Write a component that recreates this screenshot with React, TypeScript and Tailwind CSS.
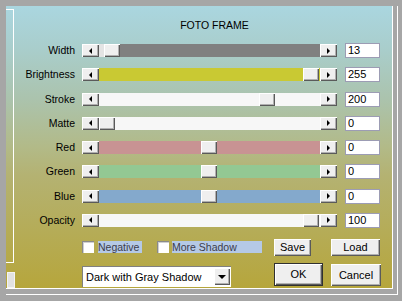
import React from 'react';

interface Row {
  label: string;
  value: string;
  offset: number;
  track: string;
  left: string;
}

const rows: Row[] = [
  { label: 'Width', value: '13', offset: 5, track: 'bg-[#808080]', left: 'bg-[#e4e4e4]' },
  { label: 'Brightness', value: '255', offset: 204, track: 'bg-[#c9c933]', left: 'bg-[#c9c933]' },
  { label: 'Stroke', value: '200', offset: 160, track: 'bg-[#f7f7f7]', left: 'bg-[#f7f7f7]' },
  { label: 'Matte', value: '0', offset: 0, track: 'bg-[#f7f7f7]', left: 'bg-[#f7f7f7]' },
  { label: 'Red', value: '0', offset: 102, track: 'bg-[#c89393]', left: 'bg-[#c89393]' },
  { label: 'Green', value: '0', offset: 102, track: 'bg-[#93c893]', left: 'bg-[#93c893]' },
  { label: 'Blue', value: '0', offset: 102, track: 'bg-[#84a9cc]', left: 'bg-[#84a9cc]' },
  { label: 'Opacity', value: '100', offset: 204, track: 'bg-[#f7f7f7]', left: 'bg-[#f7f7f7]' },
];

const raised =
  'bg-[#efefef] shadow-[inset_1px_1px_0_#ffffff,inset_-1px_-1px_0_#5a5a5a,inset_-2px_-2px_0_#b0b0b0]';

const ArrowBtn: React.FC<{ dir: 'left' | 'right' }> = ({ dir }) => (
  <div className={`w-[17px] h-[13px] flex items-center justify-center ${raised}`}>
    {dir === 'left' ? (
      <div className="w-0 h-0 border-t-[3px] border-b-[3px] border-r-[3px] border-t-transparent border-b-transparent border-r-black" />
    ) : (
      <div className="w-0 h-0 border-t-[3px] border-b-[3px] border-l-[3px] border-t-transparent border-b-transparent border-l-black" />
    )}
  </div>
);

const Slider: React.FC<{ row: Row }> = ({ row }) => (
  <div className="flex h-[13px] w-[255px]">
    <ArrowBtn dir="left" />
    <div className="flex flex-1 h-full">
      <div className={`h-full ${row.left}`} style={{ width: row.offset }} />
      <div className={`w-[16px] h-full ${raised}`} />
      <div className={`flex-1 h-full ${row.track}`} />
    </div>
    <ArrowBtn dir="right" />
  </div>
);

const Button: React.FC<{ label: string; cls: string; def?: boolean }> = ({ label, cls, def }) => (
  <div
    className={`${cls} flex items-center justify-center text-[11px] text-black ${raised} ${
      def ? 'border border-[#303030]' : ''
    }`}
  >
    {label}
  </div>
);

const Check: React.FC = () => (
  <div className="w-[12px] h-[12px] bg-white border-t border-l border-[#8a8a8a] border-r-white border-b-white shadow-[inset_1px_1px_0_#d0d0d0]" />
);

export default function App() {
  return (
    <div
      className="w-[402px] h-[301px] bg-[#a6a6a6] pt-[6px] pl-[6px] pr-[4px] pb-[6px]"
      style={{ fontFamily: '"Liberation Sans", Arial, sans-serif' }}
    >
      <div className="w-full h-full pr-[4px] pb-[5px] border-r border-b border-white">
        <div className="w-full h-full flex border-r border-b border-white bg-[linear-gradient(180deg,#aad6e0_0%,#a9cdca_16%,#abc3ad_33%,#b2ba88_50%,#b4b272_60%,#b6a63c_100%)]">
          {/* left strip */}
          <div className="w-[9px] flex flex-col pt-[3px]">
            <div className="w-[8px] h-[254px] border-t border-r border-b border-white" />
            <div className="mt-[9px] ml-[1px] w-[8px] h-[16px] bg-[#e2e2e2] border border-[#f4f4f4]" />
          </div>

          {/* main */}
          <div className="flex-1 flex flex-col">
            <div className="pt-[13px] pl-[22px] h-[38px] text-center text-[10.5px] leading-[12px] text-black">
              FOTO FRAME
            </div>

            <div className="flex flex-col gap-[11.29px]">
              {rows.map((row) => (
                <div key={row.label} className="flex items-center h-[13px]">
                  <div className="w-[60px] text-right text-[10.5px] leading-[13px] text-black">{row.label}</div>
                  <div className="ml-[7px]">
                    <Slider row={row} />
                  </div>
                  <div className="ml-[8px] w-[35px] h-[15px] bg-white border border-[#9c9cb4] pl-[2px] text-[11px] leading-[13px] text-black">
                    {row.value}
                  </div>
                </div>
              ))}
            </div>

            <div className="flex items-center h-[17px] mt-[12px] pl-[67px] text-[10.5px]">
              <Check />
              <div className="ml-[4px] w-[44px] h-[12px] leading-[12px] bg-[#b5c9e6] text-[#3c3c4c]">Negative</div>
              <div className="ml-[15px]">
                <Check />
              </div>
              <div className="ml-[3px] w-[90px] h-[12px] leading-[12px] bg-[#b5c9e6] text-[#3c3c4c]">More Shadow</div>
              <div className="ml-[12px]">
                <Button label="Save" cls="w-[37px] h-[17px]" />
              </div>
              <div className="ml-[20px]">
                <Button label="Load" cls="w-[49px] h-[17px]" />
              </div>
            </div>

            <div className="flex items-start mt-[7px] pl-[67px]">
              <div className="mt-[3px] w-[149px] h-[21px] bg-white border-t border-l border-[#808080] border-r-white border-b-white flex items-center">
                <div className="flex-1 pl-[3px] text-[11px] text-black">Dark with Gray Shadow</div>
                <div className={`w-[16px] h-[17px] mr-[1px] flex items-center justify-center ${raised}`}>
                  <div className="w-0 h-0 border-l-[4px] border-r-[4px] border-t-[4px] border-l-transparent border-r-transparent border-t-black" />
                </div>
              </div>
              <div className="ml-[43px]">
                <Button label="OK" cls="w-[49px] h-[23px]" def />
              </div>
              <div className="ml-[8px] mt-[1px]">
                <Button label="Cancel" cls="w-[50px] h-[22px]" />
              </div>
            </div>
          </div>
        </div>
      </div>
    </div>
  );
}
